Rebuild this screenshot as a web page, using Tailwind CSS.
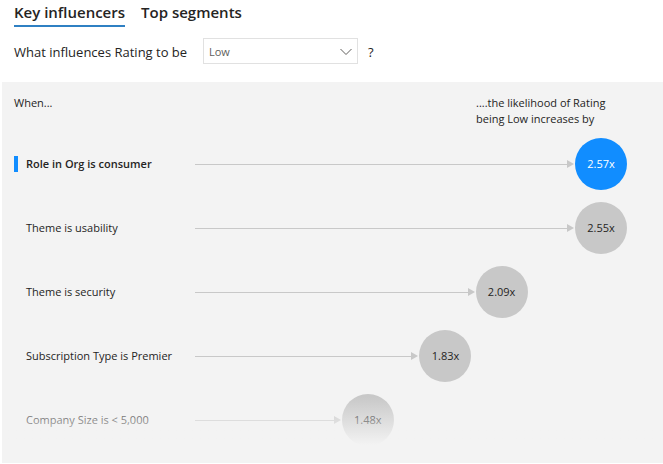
<!DOCTYPE html>
<html lang="en">
<head>
<meta charset="utf-8">
<meta name="viewport" content="width=device-width, initial-scale=1">
<title>Key influencers</title>
<script src="https://cdn.jsdelivr.net/npm/@tailwindcss/browser@4"></script>
</head>
<body class="bg-white font-['Segoe_UI','Open_Sans',sans-serif] text-[#252423]">
<main class="pl-[2px]">
  <div role="tablist" class="flex gap-4 pl-3 text-[15px] leading-6 font-semibold">
    <button type="button" role="tab" aria-selected="true" class="border-b-2 border-[#2f80c3] pb-px">Key influencers</button>
    <button type="button" role="tab" aria-selected="false" class="border-b-2 border-transparent pb-px">Top segments</button>
  </div>
  <form class="flex items-end pt-[11px] pb-[18px] pl-3 text-[13px] leading-6">
    <label for="outcome" class="w-[179px]">What influences Rating to be</label>
    <div class="relative mr-[10px] ml-[10px] w-[155px]">
      <select id="outcome" class="block h-[26px] w-full appearance-none border border-[#e1e1e1] bg-white pt-px pl-[5px] text-[11px] text-[#605e5c]">
        <option>Low</option>
        <option>High</option>
      </select>
      <svg class="pointer-events-none absolute top-[10px] right-[6px] h-2 w-3" viewBox="0 0 12 8" fill="none" stroke="#605e5c" aria-hidden="true"><path d="M.5 1 6 6.5 11.500 1"/></svg>
    </div>
    <span>?</span>
  </form>
  <section class="relative bg-[#f3f3f3] pt-[13px] pb-[11px] pl-3 text-[11px] leading-4">
    <div class="mb-[5px] flex justify-between">
      <p>When...</p>
      <p class="w-[187px]">....the likelihood of Rating<br>being Low increases by</p>
    </div>
    <ol>
      <li class="flex h-16 items-center pr-9">
        <div class="flex w-[181px] shrink-0 items-center gap-2 font-semibold"><span class="h-4 w-1 bg-[#118dff]"></span>Role in Org is consumer</div>
        <div class="flex-1"><div class="flex items-center" style="width:100%"><span class="h-px flex-1 bg-[#c8c8c8]"></span><svg class="mr-px h-2 w-[7px] fill-[#c8c8c8]" viewBox="0 0 7 8" aria-hidden="true"><path d="M0 0 7 4 0 8Z"/></svg><span class="flex size-[52px] items-center justify-center rounded-full bg-[#118dff] text-white">2.57x</span></div></div>
      </li>
      <li class="flex h-16 items-center pr-9">
        <div class="w-[181px] shrink-0 pl-3">Theme is usability</div>
        <div class="flex-1"><div class="flex items-center" style="width:100%"><span class="h-px flex-1 bg-[#c8c8c8]"></span><svg class="mr-px h-2 w-[7px] fill-[#c8c8c8]" viewBox="0 0 7 8" aria-hidden="true"><path d="M0 0 7 4 0 8Z"/></svg><span class="flex size-[52px] items-center justify-center rounded-full bg-[#c8c8c8]">2.55x</span></div></div>
      </li>
      <li class="flex h-16 items-center pr-9">
        <div class="w-[181px] shrink-0 pl-3">Theme is security</div>
        <div class="flex-1"><div class="flex items-center" style="width:77%"><span class="h-px flex-1 bg-[#c8c8c8]"></span><svg class="mr-px h-2 w-[7px] fill-[#c8c8c8]" viewBox="0 0 7 8" aria-hidden="true"><path d="M0 0 7 4 0 8Z"/></svg><span class="flex size-[52px] items-center justify-center rounded-full bg-[#c8c8c8]">2.09x</span></div></div>
      </li>
      <li class="flex h-16 items-center pr-9">
        <div class="w-[181px] shrink-0 pl-3">Subscription Type is Premier</div>
        <div class="flex-1"><div class="flex items-center" style="width:64%"><span class="h-px flex-1 bg-[#c8c8c8]"></span><svg class="mr-px h-2 w-[7px] fill-[#c8c8c8]" viewBox="0 0 7 8" aria-hidden="true"><path d="M0 0 7 4 0 8Z"/></svg><span class="flex size-[52px] items-center justify-center rounded-full bg-[#c8c8c8]">1.83x</span></div></div>
      </li>
      <li class="flex h-16 items-center pr-9">
        <div class="w-[181px] shrink-0 pl-3">Company Size is &lt; 5,000</div>
        <div class="flex-1"><div class="flex items-center" style="width:46%"><span class="h-px flex-1 bg-[#c8c8c8]"></span><svg class="mr-px h-2 w-[7px] fill-[#c8c8c8]" viewBox="0 0 7 8" aria-hidden="true"><path d="M0 0 7 4 0 8Z"/></svg><span class="flex size-[52px] items-center justify-center rounded-full bg-[#c8c8c8]">1.48x</span></div></div>
      </li>
    </ol>
    <div class="pointer-events-none absolute inset-x-0 bottom-[18px] h-12 bg-linear-to-b from-[#f3f3f3]/0 to-[#f3f3f3]"></div>
    <div class="pointer-events-none absolute inset-x-0 bottom-0 h-[18px] bg-[#f3f3f3]"></div>
  </section>
</main>
</body>
</html>
